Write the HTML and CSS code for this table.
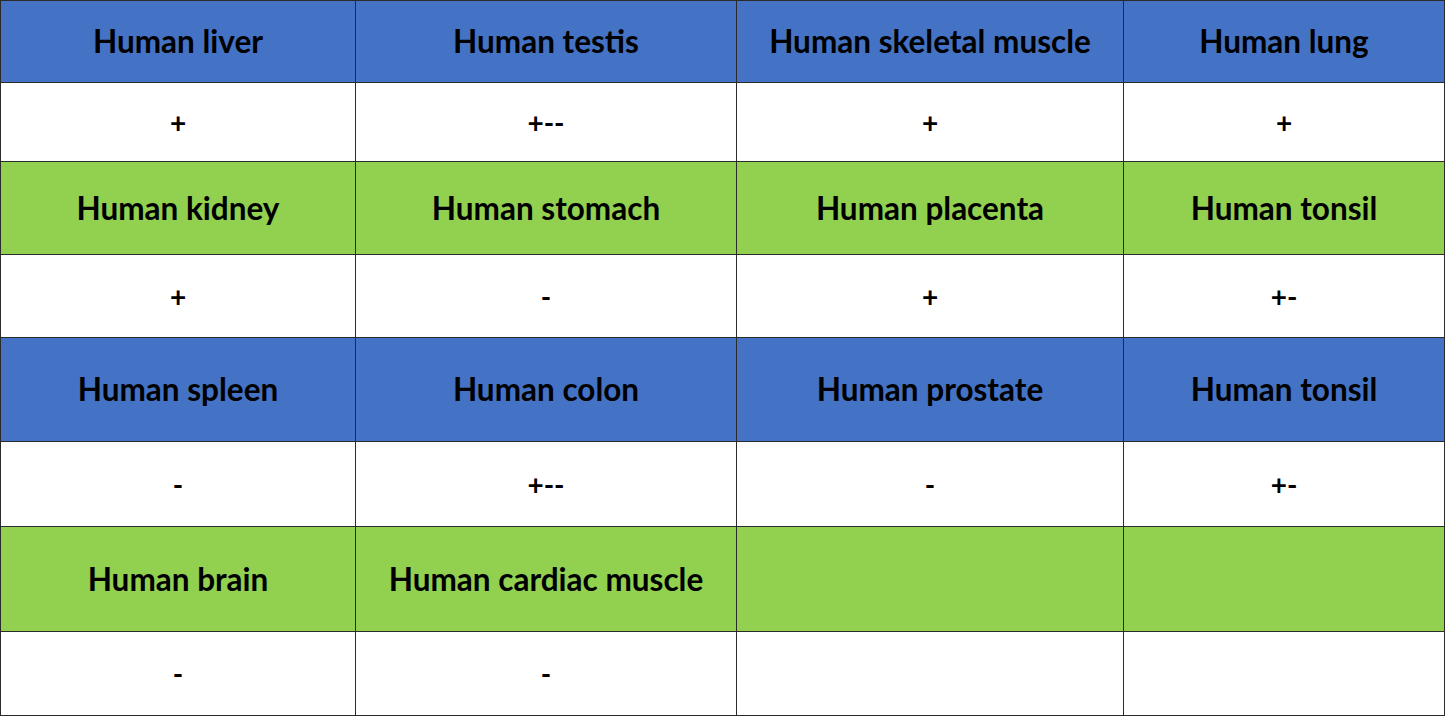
FILE: index.html
```html
<!DOCTYPE html>
<html>
<head>
<meta charset="utf-8">
<link rel="stylesheet" href="styles.css">
</head>
<body>
<table class="grid">
  <colgroup>
    <col class="c1"><col class="c2"><col class="c3"><col class="c4">
  </colgroup>
  <tr class="head blue r1"><td>Human liver</td><td>Human testis</td><td>Human skeletal muscle</td><td>Human lung</td></tr>
  <tr class="val r2"><td>+</td><td>+--</td><td>+</td><td>+</td></tr>
  <tr class="head green r3"><td>Human kidney</td><td>Human stomach</td><td>Human placenta</td><td>Human tonsil</td></tr>
  <tr class="val r4"><td>+</td><td>-</td><td>+</td><td>+-</td></tr>
  <tr class="head blue r5"><td>Human spleen</td><td>Human colon</td><td>Human prostate</td><td>Human tonsil</td></tr>
  <tr class="val r6"><td>-</td><td>+--</td><td>-</td><td>+-</td></tr>
  <tr class="head green r7"><td>Human brain</td><td>Human cardiac muscle</td><td></td><td></td></tr>
  <tr class="val r8"><td>-</td><td>-</td><td></td><td></td></tr>
</table>
</body>
</html>
```
FILE: styles.css
```css
html, body {
  margin: 0;
  padding: 0;
  background: #ffffff;
}
.grid {
  border-collapse: collapse;
  table-layout: fixed;
  width: 1444px;
  font-family: Lato, "Open Sans", sans-serif;
  font-weight: 700;
  color: #000;
}
.c1 { width: 355px; }
.c2 { width: 381px; }
.c3 { width: 387px; }
.c4 { width: 321px; }
.grid td {
  border: 1px solid #2b2b2b;
  text-align: center;
  vertical-align: middle;
  padding: 0;
  line-height: 1.1;
}
.head td { font-size: 31.5px; }
.val td { font-size: 28px; }
.blue td { background: #4472c4; }
.green td { background: #92d050; }
.r1 td { height: 81px; }
.r2 td { height: 78px; }
.r3 td { height: 92px; }
.r4 td { height: 82px; }
.r5 td { height: 103px; }
.r6 td { height: 84px; }
.r7 td { height: 104px; }
.r8 td { height: 83px; }
```
